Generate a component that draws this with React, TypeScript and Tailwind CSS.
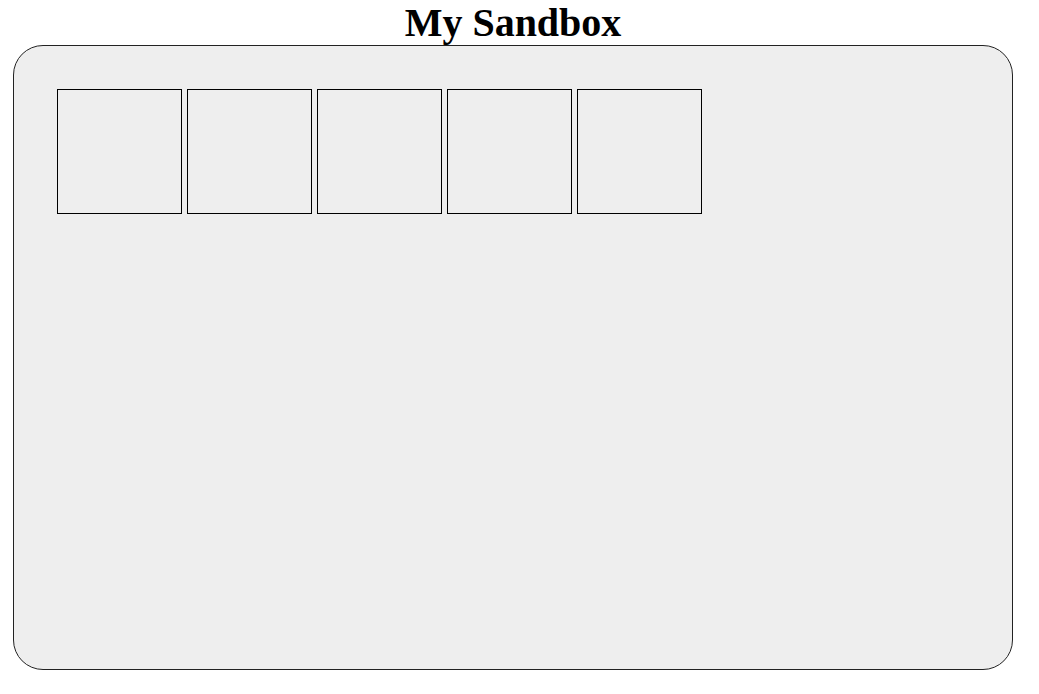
export default function App() {
  const slots = [0, 1, 2, 3, 4];
  return (
    <div className="min-h-screen w-full bg-white">
      <div className="ml-[13px] w-[1000px]">
        {/* Title */}
        <h1 className="m-0 text-center text-[40px] font-bold leading-[45px] text-black [font-family:'Liberation_Serif',serif]">
          My Sandbox
        </h1>

        {/* Sandbox area */}
        <div className="box-border h-[625px] w-[1000px] rounded-[30px] border border-[#222] bg-[#eeeeee] p-[43px]">
          <div className="flex gap-[5px]">
            {slots.map((i) => (
              <div key={i} className="box-border h-[125px] w-[125px] border border-black" />
            ))}
          </div>
        </div>
      </div>
    </div>
  );
}
